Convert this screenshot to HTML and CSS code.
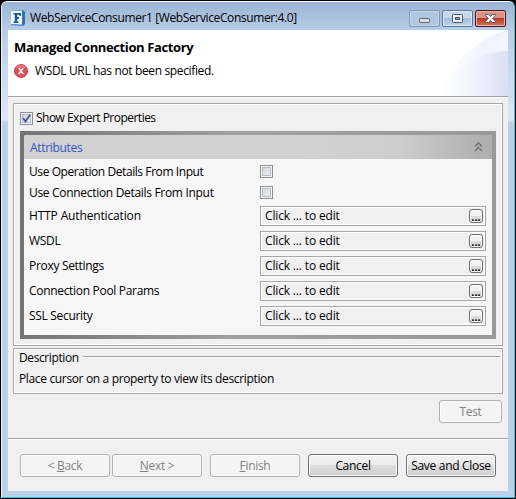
FILE: index.html
```html
<!DOCTYPE html>
<html lang="en">
<head>
<meta charset="utf-8">
<title>WebServiceConsumer1</title>
<link rel="stylesheet" href="styles.css">
</head>
<body>
<div class="window">
  <header class="titlebar">
    <svg class="app-icon" width="16" height="16" viewBox="0 0 16 16">
      <path d="M1 1 13 0l2 2v12l-2 2-12-1z" fill="#3f86b4"/>
      <path d="M12 1l3 1v12l-3 1z" fill="#2b78a8"/>
      <path d="M1 1 12 .8v13.7L1 14z" fill="#f4fbff"/>
      <path d="M3.500 3H11v3H9.500V4.700H7.200V7H9v2H7.200v2.500h1.300V13H3.500v-1.500h1.300v-7H3.500z" fill="#155c89"/>
    </svg>
    <span class="title">WebServiceConsumer1 [WebServiceConsumer:4.0]</span>
    <div class="controls">
      <span class="control control-min"><svg width="29" height="15"><rect x="9.500" y="7.500" width="10" height="4" rx=".8" fill="#dedede" stroke="#646467"/></svg></span>
      <span class="control"><svg width="29" height="15"><rect x="9.500" y="3.500" width="10" height="8" rx=".8" fill="#f0f0f2" stroke="#4e5465"/><rect x="12.500" y="6.500" width="4" height="2" fill="#8db0d6" stroke="#4e5465"/></svg></span>
      <span class="control control-close"><svg width="29" height="15"><path d="M9.500 3.500h3.200l1.800 2 1.800-2h3.200v1.200L16.700 7.500l2.800 2.800v1.200h-3.200l-1.800-2-1.800 2H9.500v-1.200l2.800-2.800-2.800-2.800z" fill="#f3f3f5" stroke="#565969"/></svg></span>
    </div>
  </header>
  <main class="content">
    <section class="banner">
      <svg class="swoosh" width="80" height="66" viewBox="0 0 80 66">
        <defs>
          <linearGradient id="g1"><stop offset=".1" stop-color="#fff"/><stop offset="1" stop-color="#e9effb"/></linearGradient>
          <linearGradient id="g2"><stop offset=".1" stop-color="#fff"/><stop offset=".6" stop-color="#edf1fc"/><stop offset="1" stop-color="#dae0f5"/></linearGradient>
        </defs>
        <path d="M8 66Q35 12 80 0v66z" fill="url(#g1)"/>
        <path d="M44 36Q52 12 80 0v22Q60 24 44 36z" fill="#f1f5fd"/>
        <path d="M8 66Q40 21 80 21v45z" fill="url(#g2)"/>
      </svg>
      <h1>Managed Connection Factory</h1>
      <p class="message">
        <svg width="14" height="14" viewBox="0 0 14 14"><circle cx="7" cy="7" r="6.500" fill="#df4c57" stroke="#cf3b46"/><path d="M2.500 4a5.500 5.500 0 0 1 9 0" fill="none" stroke="#f0a0a5"/><path d="M4.700 3.800l4.600 6.200M9.300 3.800l-4.600 6.200" stroke="#fff" stroke-width="1.400"/></svg>
        <span>WSDL URL has not been specified.</span>
      </p>
    </section>
    <section class="body">
      <div class="group properties">
        <label class="expert"><span class="check checked"><svg width="9" height="9" viewBox="0 0 9 9"><path d="M1 4l2.500 3.500L8 .8" fill="none" stroke="#4659a0" stroke-width="1.900"/></svg></span><span class="tight">Show Expert Properties</span></label>
        <div class="panel">
          <div class="panel-body">
            <div class="panel-head"><span>Attributes</span><svg width="9" height="10" viewBox="0 0 9 10"><path d="M1 4.500 4.500 1 8 4.500M1 9l3.500-3.500L8 9" fill="none" stroke="#777" stroke-width="1.700"/></svg></div>
            <div class="rows">
              <span class="snug">Use Operation Details From Input</span><span class="check"></span>
              <span>Use Connection Details From Input</span><span class="check"></span>
              <span class="loose">HTTP Authentication</span><div class="field"><span>Click ... to edit</span><button>...</button></div>
              <span>WSDL</span><div class="field"><span>Click ... to edit</span><button>...</button></div>
              <span>Proxy Settings</span><div class="field"><span>Click ... to edit</span><button>...</button></div>
              <span>Connection Pool Params</span><div class="field"><span>Click ... to edit</span><button>...</button></div>
              <span>SSL Security</span><div class="field"><span>Click ... to edit</span><button>...</button></div>
            </div>
          </div>
        </div>
      </div>
      <div class="group description">
        <div class="legend"><span>Description</span><i></i></div>
        <p>Place cursor on a property to view its description</p>
      </div>
      <div class="test-row"><button class="btn btn-test" disabled>Test</button></div>
    </section>
    <footer class="actions">
      <button class="btn" disabled>&lt; <u>B</u>ack</button>
      <button class="btn" disabled><u>N</u>ext &gt;</button>
      <button class="btn gap" disabled><u>F</u>inish</button>
      <button class="btn gap">Cancel</button>
      <button class="btn gap">Save and Close</button>
    </footer>
  </main>
</div>
</body>
</html>
```
FILE: styles.css
```css
* { box-sizing: border-box; margin: 0; }
body { width: 516px; height: 499px; overflow: hidden; background: #000; color: #000; font: 12px/16px "Open Sans", "Noto Sans", sans-serif; letter-spacing: -0.31px; white-space: nowrap; }
button { font: inherit; letter-spacing: inherit; color: inherit; padding: 0; }
svg { display: block; flex: none; }
.window { width: 514px; height: 497px; margin: 1px; padding: 0 6px 6px; border: 1px solid #35c4dc; border-top-color: #f4f9fd; border-left-color: #e9f2fa; border-radius: 6px 6px 0 0; background: linear-gradient(#9ab5d5 0, #b7cde7 28px, #c8daee 70px, #dce8f5 118px, #b9d1ea 120px); display: flex; flex-direction: column; }
.titlebar { height: 28px; flex: none; display: flex; align-items: flex-start; padding-left: 2px; }
.app-icon { margin-top: 8px; }
.title { margin: 8px 0 0 4px; letter-spacing: -0.38px; }
.controls { display: flex; gap: 2px; margin: 8px 2px 0 auto; }
.control { width: 31px; height: 17px; border: 1px solid #5f7796; border-radius: 2px; box-shadow: inset 0 0 0 1px #d9e6f4; background: linear-gradient(#c4d7eb 50%, #a3bfdd 50%, #bdd4eb); }
.control-min { border-color: #8299b6; background: #b0c7e1; box-shadow: inset 0 0 0 1px #c2d4e8; }
.control-close { border-color: #4b1722; box-shadow: inset 0 0 0 1px #e8b2a6; background: linear-gradient(#dc9384 50%, #b93b25 50%, #d37558); }
.content { flex: 1; width: 500px; background: #f0f0f0; display: flex; flex-direction: column; }
.banner { position: relative; height: 68px; background: #fff; border-bottom: 1px solid #fff; box-shadow: inset 0 -1px #a0a0a0; padding: 8px 0 0 6px; flex: none; }
.swoosh { position: absolute; right: 0; top: 0; }
h1 { font-size: 13px; line-height: 19px; font-weight: 700; letter-spacing: -0.38px; }
.message { display: flex; align-items: center; gap: 7px; margin-top: 6px; letter-spacing: -0.36px; }
.body { padding: 5px 5px 0; height: 340px; }
.group { border: 1px solid #a5a6aa; box-shadow: inset 0 0 0 1px #fff; width: 490px; }
.properties { height: 243px; padding: 6px; }
.expert { display: flex; align-items: center; gap: 3px; height: 16px; }
.tight { letter-spacing: -0.52px; }
.snug { letter-spacing: -0.42px; }
.loose { letter-spacing: -0.15px; }
.check { width: 13px; height: 13px; border: 1px solid #8e8f8f; box-shadow: inset 0 0 0 1px #f4f4f4, inset 0 0 0 2px #b8bec5; background: linear-gradient(135deg, #cbd0d6, #f6f6f6); display: block; padding: 1px; }
.panel { width: 476px; height: 208px; margin-top: 5px; padding: 4px; background: linear-gradient(90deg, #747474, #a0a0a0 45%, #999); }
.panel-body { height: 200px; background: #f6f6f6; border-radius: 2px 2px 0 0; }
.panel-head { height: 24px; border-radius: 2px 2px 0 0; background: linear-gradient(90deg, #d1d1d1 60%, #cecece 80%, #b0b0b0 98%); color: #3058c4; display: flex; align-items: center; justify-content: space-between; padding: 0 9px 0 6px; }
.panel-head span { padding-top: 2px; }
.rows { display: grid; grid-template-columns: 231px 226px; grid-template-rows: 21px 21px repeat(5, 25px); align-items: center; padding: 2px 0 0 5px; line-height: 17px; }
.rows .check { align-self: start; margin-top: 4px; }
.field { align-self: start; margin-top: 3px; height: 20px; border: 1px solid #a5a6aa; box-shadow: inset 0 0 0 1px #fff; background: #f0f0f0; display: flex; justify-content: space-between; align-items: center; padding: 0 2px 0 4px; letter-spacing: -0.16px; line-height: 16px; }
.field button { width: 14px; height: 14px; border: 1px solid #707070; border-radius: 3px; box-shadow: inset 0 0 0 1px #fafafa; background: linear-gradient(#f2f2f2 50%, #ddd 50%, #cfcfcf); font-weight: 700; line-height: 11px; letter-spacing: 0; font-size: 11px; }
.description { margin-top: 2px; height: 46px; padding: 1px 2px 0 5px; }
.legend { display: flex; gap: 4px; height: 16px; letter-spacing: -0.4px; }
.legend i { flex: 1; height: 2px; background: #a0a0a0; border-bottom: 1px solid #fff; margin-top: 6px; }
.description p { margin-top: 5px; letter-spacing: -0.35px; }
.test-row { display: flex; justify-content: flex-end; padding: 6px 1px 0 0; }
.btn { width: 90px; height: 23px; border: 1px solid #707070; border-radius: 3px; box-shadow: inset 0 0 0 1px #fbfbfb; background: linear-gradient(#f2f2f2, #ebebeb 50%, #ddd 50%, #cfcfcf); padding-top: 1px; }
.btn:disabled { border-color: #adb2b5; background: #f4f4f4; color: #838383; }
.btn-test { width: 63px; }
.actions { flex: 1; border-top: 1px solid #a0a0a0; box-shadow: inset 0 1px #fff; display: flex; gap: 2px; padding: 15px 0 0 12px; }
.gap { margin-left: 6px; }
```
